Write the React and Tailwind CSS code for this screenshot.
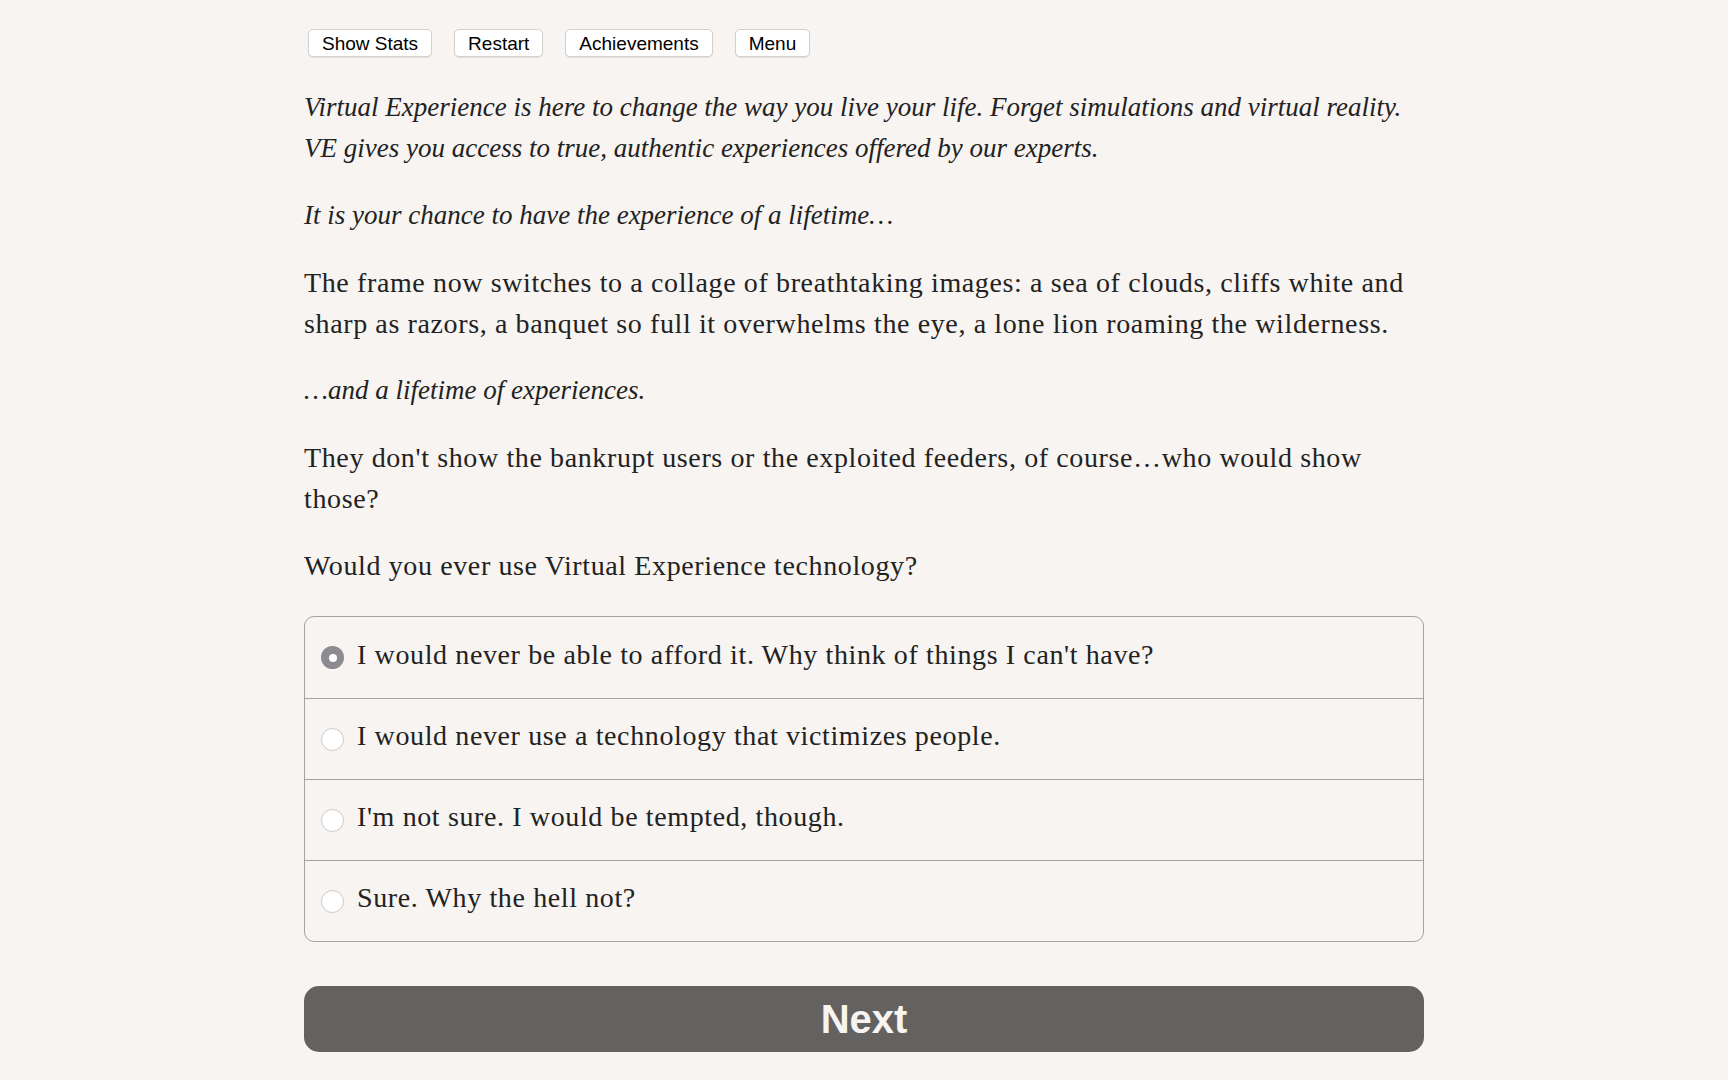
import React from 'react';

const serif = { fontFamily: '"Liberation Serif", "Times New Roman", serif' };

const choices = [
  "I would never be able to afford it. Why think of things I can't have?",
  'I would never use a technology that victimizes people.',
  "I'm not sure. I would be tempted, though.",
  'Sure. Why the hell not?',
];

const App = () => {
  return (
    <div className="min-h-screen bg-[#f7f4f1] text-[#222]">
      <div className="w-[1120px] mx-auto pt-[29px]">
        {/* Top buttons */}
        <div className="flex gap-[22px] pl-[4px] font-['Liberation_Sans',Arial,sans-serif]">
          {['Show Stats', 'Restart', 'Achievements', 'Menu'].map((label) => (
            <button
              key={label}
              className="h-[28px] px-[13px] text-[19px] leading-none text-black bg-white border border-[#d2d0cd] rounded-[5px] shadow-[0_1px_1px_rgba(0,0,0,0.08)]"
            >
              {label}
            </button>
          ))}
        </div>

        {/* Story text */}
        <div className="mt-[30px] leading-[41px]" style={serif}>
          <p className="italic text-[27px] mb-[26px]">
            Virtual Experience is here to change the way you live your life. Forget simulations and virtual reality. VE gives you access to true, authentic experiences offered by our experts.
          </p>
          <p className="italic text-[27px] mb-[26px]">It is your chance to have the experience of a lifetime…</p>
          <p className="text-[28px] tracking-[0.62px] mb-[26px]">
            The frame now switches to a collage of breathtaking images: a sea of clouds, cliffs white and sharp as razors, a banquet so full it overwhelms the eye, a lone lion roaming the wilderness.
          </p>
          <p className="italic text-[27px] mb-[26px]">…and a lifetime of experiences.</p>
          <p className="text-[28px] tracking-[0.62px] mb-[26px]">
            They don't show the bankrupt users or the exploited feeders, of course…who would show those?
          </p>
          <p className="text-[28px] tracking-[0.62px]">Would you ever use Virtual Experience technology?</p>
        </div>

        {/* Choices */}
        <div className="mt-[30px] border border-[#a3a3a3] rounded-[10px] overflow-hidden" style={serif}>
          {choices.map((c, i) => (
            <div
              key={c}
              className={`flex items-center h-[81px] pl-[16px] pb-[6px] text-[28px] tracking-[0.62px] ${i > 0 ? 'border-t border-[#a3a3a3]' : ''}`}
            >
              {i === 0 ? (
                <span className="mt-[6px] w-[23px] h-[23px] rounded-full bg-[#8c8b90] flex items-center justify-center shrink-0">
                  <span className="w-[8px] h-[8px] rounded-full bg-white" />
                </span>
              ) : (
                <span className="mt-[6px] w-[23px] h-[23px] rounded-full bg-white border border-[#c9c9c9] shrink-0" />
              )}
              <span className="ml-[13px]">{c}</span>
            </div>
          ))}
        </div>

        {/* Next */}
        <button className="mt-[44px] w-full h-[66px] rounded-[15px] bg-[#636261] text-[#f7f4f1] text-[40px] font-bold font-['Liberation_Sans',Arial,sans-serif]">
          Next
        </button>
      </div>
    </div>
  );
};

export default App;
